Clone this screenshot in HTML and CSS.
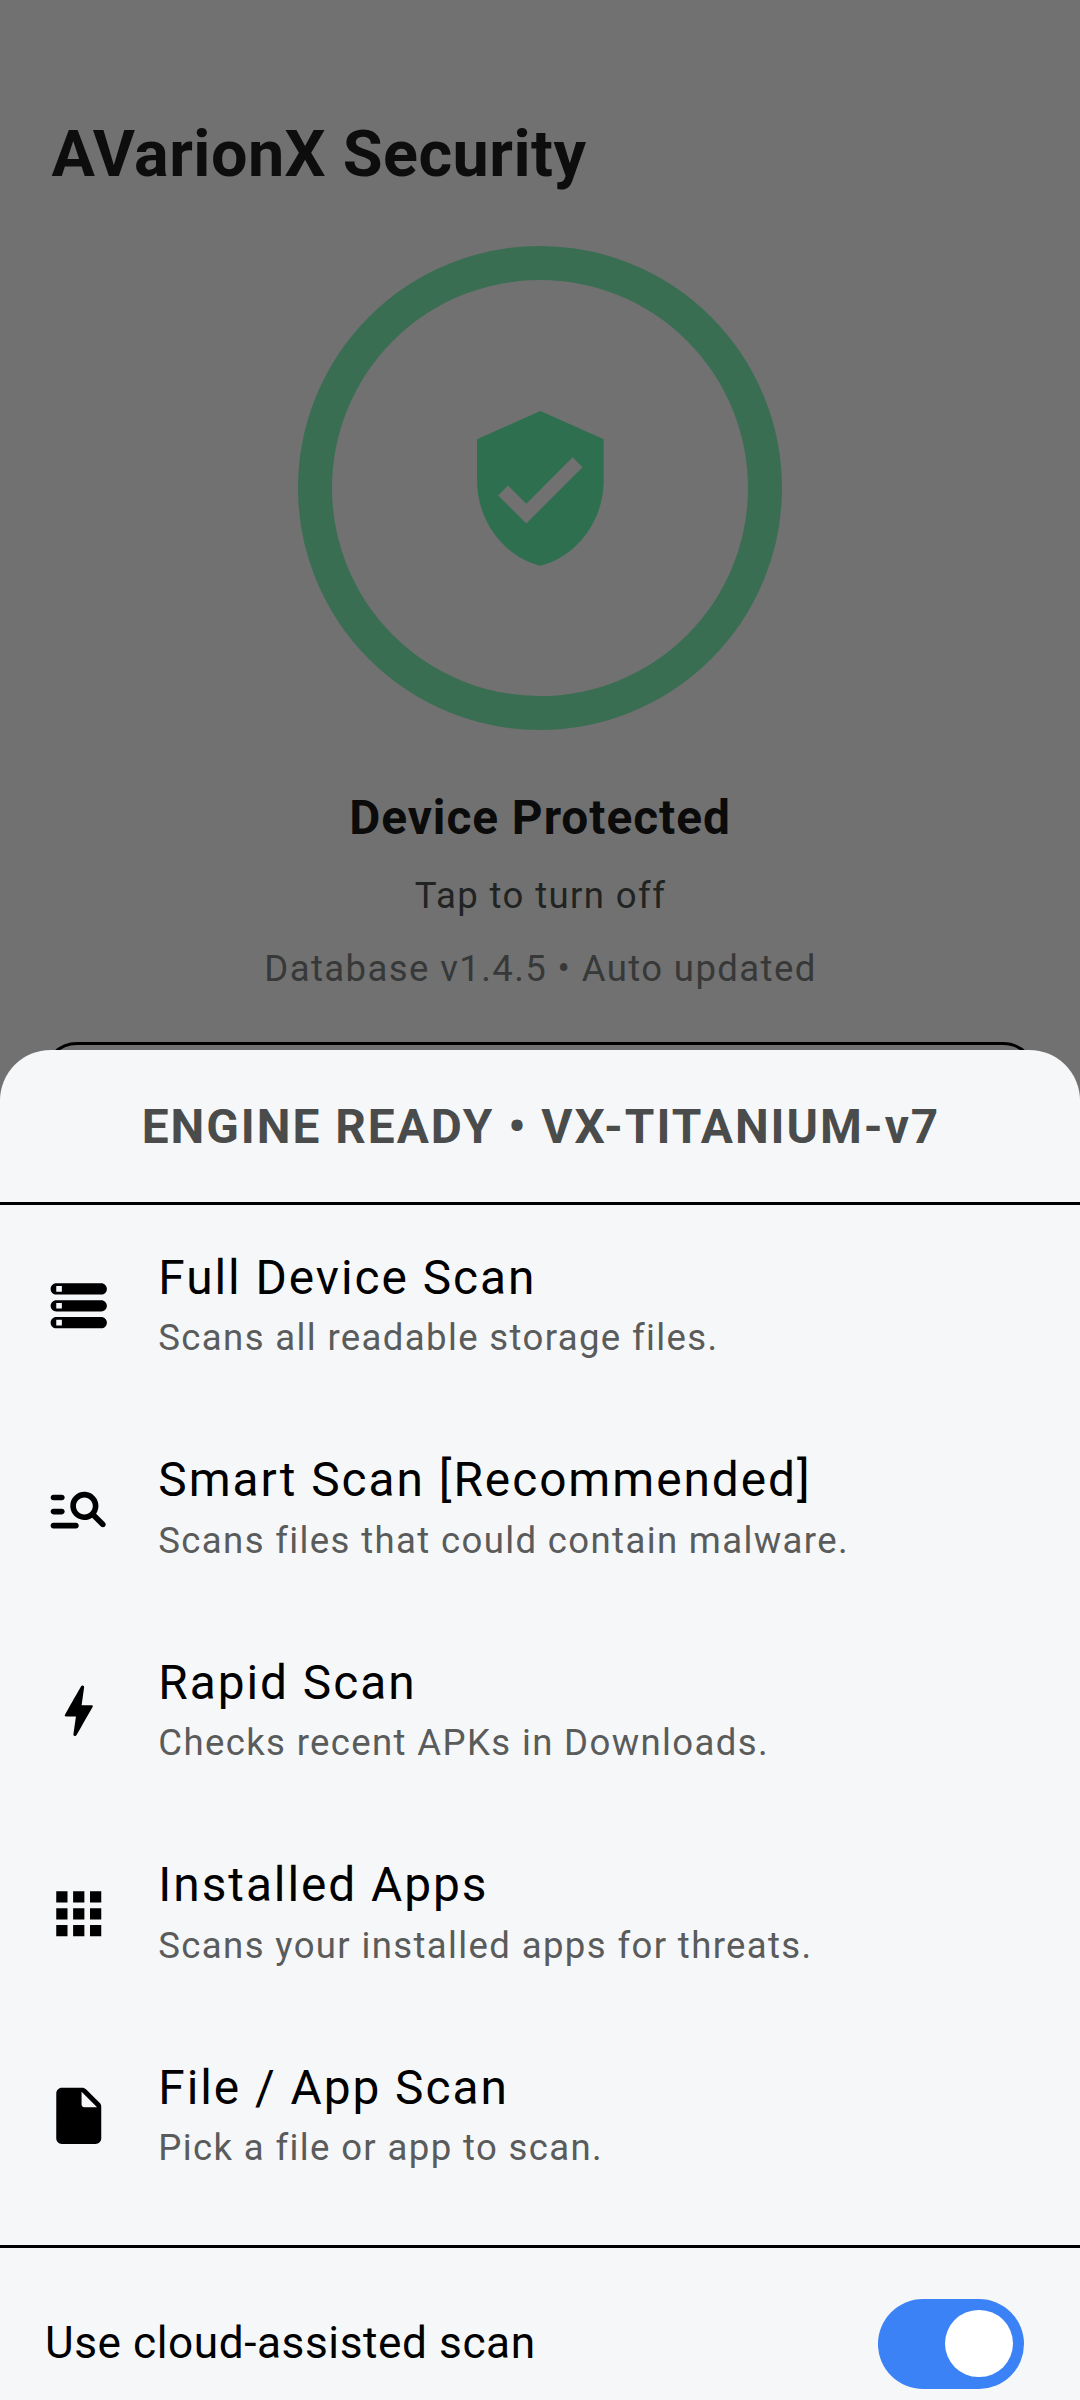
FILE: index.html
```html
<!DOCTYPE html>
<html lang="en">
<head>
<meta charset="utf-8">
<title>AVarionX Security</title>
<link rel="stylesheet" href="styles.css">
</head>
<body>
<div class="screen">
  <main class="home">
    <h1 class="app-title">AVarionX Security</h1>
    <div class="ring">
      <svg class="shield" viewBox="0 0 24 24"><path d="M12 1L3 5v6c0 5.55 3.84 10.74 9 12 5.16-1.26 9-6.45 9-12V5l-9-4zm-2 16l-4-4 1.41-1.41L10 14.17l6.59-6.59L18 9l-8 8z"/></svg>
    </div>
    <h2 class="status">Device Protected</h2>
    <p class="hint">Tap to turn off</p>
    <p class="database">Database v1.4.5 • Auto updated</p>
    <div class="card"></div>
  </main>

  <section class="sheet">
    <header class="sheet-header">ENGINE READY • VX-TITANIUM-v7</header>
    <ul class="options">
      <li class="option">
        <svg class="icon" viewBox="0 0 24 24"><path d="M4 20h16c1.1 0 2-.9 2-2s-.9-2-2-2H4c-1.1 0-2 .9-2 2s.9 2 2 2zm0-3h2v2H4v-2zM2 6c0 1.1.9 2 2 2h16c1.1 0 2-.9 2-2s-.9-2-2-2H4c-1.1 0-2 .9-2 2zm4 1H4V5h2v2zm-2 7h16c1.1 0 2-.9 2-2s-.9-2-2-2H4c-1.1 0-2 .9-2 2s.9 2 2 2zm0-3h2v2H4v-2z"/></svg>
        <div class="option-text"><h3>Full Device Scan</h3><p>Scans all readable storage files.</p></div>
      </li>
      <li class="option">
        <svg class="icon" viewBox="0 0 24 24"><path d="M6 9H3c-.55 0-1-.45-1-1s.45-1 1-1h3c.55 0 1 .45 1 1s-.45 1-1 1zm0 3H3c-.55 0-1 .45-1 1s.45 1 1 1h3c.55 0 1-.45 1-1s-.45-1-1-1zm13.88 6.29l-3.12-3.12c-.86.56-1.89.88-3 .82-2.37-.11-4.4-1.96-4.72-4.31-.44-3.35 2.45-6.18 5.83-5.61 1.95.33 3.57 1.85 4 3.78.33 1.46.01 2.82-.7 3.9l3.13 3.13c.39.39.39 1.02 0 1.41-.39.39-1.03.39-1.42 0zM17 11c0-1.65-1.35-3-3-3s-3 1.35-3 3 1.35 3 3 3 3-1.35 3-3zM3 19h8c.55 0 1-.45 1-1s-.45-1-1-1H3c-.55 0-1 .45-1 1s.45 1 1 1z"/></svg>
        <div class="option-text"><h3>Smart Scan [Recommended]</h3><p>Scans files that could contain malware.</p></div>
      </li>
      <li class="option">
        <svg class="icon" viewBox="0 0 24 24"><path d="M10.67 21c-.35 0-.62-.31-.57-.66L11 14H7.5c-.88 0-.33-.75-.31-.78 1.26-2.23 3.15-5.53 5.65-9.93.1-.18.3-.29.5-.29.35 0 .62.31.57.66L13.01 10h3.51c.4 0 .62.19.4.66-3.29 5.74-5.2 9.09-5.75 10.05-.1.18-.29.29-.5.29z"/></svg>
        <div class="option-text"><h3>Rapid Scan</h3><p>Checks recent APKs in Downloads.</p></div>
      </li>
      <li class="option">
        <svg class="icon" viewBox="0 0 24 24"><path d="M4 8h4V4H4v4zm6 12h4v-4h-4v4zm-6 0h4v-4H4v4zm0-6h4v-4H4v4zm6 0h4v-4h-4v4zm6-10v4h4V4h-4zm-6 4h4V4h-4v4zm6 6h4v-4h-4v4zm0 6h4v-4h-4v4z"/></svg>
        <div class="option-text"><h3>Installed Apps</h3><p>Scans your installed apps for threats.</p></div>
      </li>
      <li class="option">
        <svg class="icon" viewBox="0 0 24 24"><path d="M6 2c-1.1 0-1.99.9-1.99 2L4 20c0 1.1.89 2 1.99 2H18c1.1 0 2-.9 2-2V8.83c0-.53-.21-1.04-.59-1.41l-4.83-4.83c-.37-.38-.88-.59-1.41-.59H6zm7 6V3.5L18.5 9H14c-.55 0-1-.45-1-1z"/></svg>
        <div class="option-text"><h3>File / App Scan</h3><p>Pick a file or app to scan.</p></div>
      </li>
    </ul>
    <footer class="cloud">
      <span class="cloud-label">Use cloud-assisted scan</span>
      <span class="toggle"><span class="knob"></span></span>
    </footer>
  </section>
</div>
</body>
</html>
```
FILE: styles.css
```css
* {
  box-sizing: border-box;
  margin: 0;
  padding: 0;
}

body {
  font-family: Roboto, sans-serif;
  font-weight: 400;
}

.screen {
  position: relative;
  width: 1080px;
  height: 2400px;
  overflow: hidden;
  background: #717171;
}

.home {
  display: flex;
  flex-direction: column;
  align-items: center;
  padding: 116px 43px 0;
}

.app-title {
  align-self: flex-start;
  padding-left: 8.4px;
  font-size: 64.69px;
  font-weight: 700;
  line-height: 76px;
  letter-spacing: 0.47px;
  color: #0d0d0d;
}

.ring {
  display: flex;
  align-items: center;
  justify-content: center;
  width: 484px;
  height: 484px;
  margin-top: 54.4px;
  border: 34px solid #3a6e53;
  border-radius: 50%;
}

.shield {
  width: 168.75px;
  height: 168.75px;
  fill: #2e6f50;
}

.status {
  margin-top: 59.6px;
  font-size: 47.81px;
  font-weight: 700;
  line-height: 56px;
  letter-spacing: 0.95px;
  color: #0b0b0b;
}

.hint,
.database {
  font-size: 36.56px;
  line-height: 43px;
  letter-spacing: 1.38px;
}

.hint {
  margin-top: 28px;
  padding-left: 1px;
  color: #212322;
}

.database {
  margin-top: 30px;
  padding-left: 1px;
  color: #373838;
}

.card {
  width: 100%;
  height: 400px;
  margin-top: 52px;
  border: 3px solid #000;
  border-radius: 34px;
}

.sheet {
  position: absolute;
  inset: 1050px 0 0;
  border-radius: 50.6px 50.6px 0 0;
  background: #f6f7f9;
  overflow: hidden;
}

.sheet-header {
  height: 155px;
  padding: 49px 0 0 2px;
  border-bottom: 3px solid #000;
  text-align: center;
  font-size: 47.81px;
  font-weight: 700;
  line-height: 56px;
  letter-spacing: 1.98px;
  color: #4a4c4b;
}

.options {
  height: 1043px;
  border-bottom: 3px solid #000;
  list-style: none;
}

.option {
  display: flex;
  align-items: center;
  gap: 45.8px;
  height: 202.5px;
  padding: 0 45px;
}

.option:first-child {
  height: 202px;
}

.icon {
  width: 67.5px;
  height: 67.5px;
  fill: #000;
}

.option-text h3 {
  font-size: 47.81px;
  font-weight: 400;
  line-height: 56px;
  letter-spacing: 1.97px;
  color: #000;
}

.option-text p {
  margin: 10.5px 0 2.6px;
  font-size: 36.56px;
  line-height: 43px;
  letter-spacing: 1.36px;
  color: #5a5b5b;
}

.cloud {
  display: flex;
  align-items: center;
  justify-content: space-between;
  padding: 50.5px 56.25px 0 45px;
}

.cloud-label {
  margin-bottom: 1px;
  font-size: 44.2px;
  line-height: 56px;
  letter-spacing: 0.56px;
  color: #000;
}

.toggle {
  display: flex;
  align-items: center;
  justify-content: flex-end;
  width: 146.25px;
  height: 90px;
  padding: 0 11.25px;
  border-radius: 45px;
  background: #3b82f6;
}

.knob {
  width: 67.5px;
  height: 67.5px;
  border-radius: 50%;
  background: #fff;
}
```
